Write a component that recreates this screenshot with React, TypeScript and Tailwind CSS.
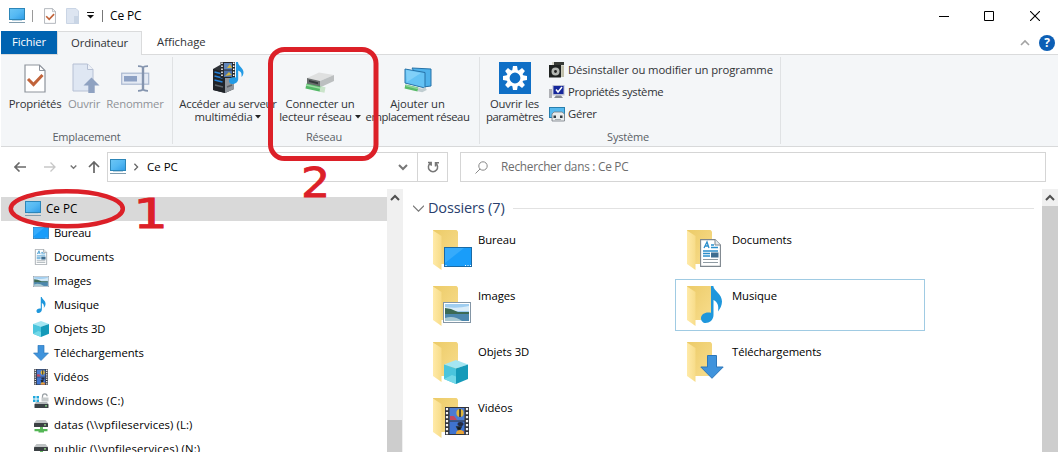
import React from "react";

type IconProps = { className?: string };

function Monitor({ className = "w-4 h-4" }: IconProps) {
  return (
    <svg viewBox="0 0 16 16" className={className}>
      <defs>
        <linearGradient id="scr" x1="0" y1="0" x2="1" y2="1">
          <stop offset="0" stopColor="#6cc6f5" />
          <stop offset=".5" stopColor="#55b9f3" />
          <stop offset="1" stopColor="#2e9be6" />
        </linearGradient>
      </defs>
      <rect x=".5" y=".5" width="15" height="11" fill="url(#scr)" stroke="#2d86b8" />
      <path d="M3 12.500h10" stroke="#b9d3e2" strokeWidth="1" />
      <path d="M0 14.500h16" stroke="#7f9cae" strokeWidth="1" />
    </svg>
  );
}

function CheckDoc({ className }: IconProps) {
  return (
    <svg viewBox="0 0 22 29" className={className}>
      <path d="M1 1h14.5L21 6.5V28H1z" fill="#fff" stroke="#8d939c" strokeWidth="1.2" />
      <path d="M15.5 1v5.5H21" fill="none" stroke="#8d939c" strokeWidth="1" />
      <path d="M4 15l5.500 5.500 9-9.500" fill="none" stroke="#c1633a" strokeWidth="3" />
    </svg>
  );
}

function OpenDoc({ className }: IconProps) {
  return (
    <svg viewBox="0 0 28 31" className={className}>
      <path d="M1 1h14.500L21 6.500V28H1z" fill="#dfe7f3" stroke="#b6c0d4" />
      <path d="M15.500 1v5.500H21" fill="#eef2f8" stroke="#b6c0d4" />
      <path d="M19.500 14.500l8 8h-4.800V30h-6.400v-7.500h-4.800z" fill="#8fa2c1" />
    </svg>
  );
}

function Rename({ className }: IconProps) {
  return (
    <svg viewBox="0 0 29 27" className={className}>
      <rect x=".7" y="8.200" width="27" height="11" fill="#e4eaf4" stroke="#aab8d0" strokeWidth="1.200" />
      <rect x="3" y="11" width="13" height="5.500" fill="#8da1c4" />
      <path d="M22 2v23" stroke="#8494ae" strokeWidth="2.400" />
      <path d="M17 1.200c3 0 5 .6 5 2 0-1.400 2-2 5-2M17 25.800c3 0 5-.6 5-2 0 1.400 2 2 5 2" fill="none" stroke="#8494ae" strokeWidth="1.800" />
    </svg>
  );
}

function Film({ className }: IconProps) {
  return (
    <svg viewBox="0 0 24 28" className={className}>
      <rect width="24" height="28" fill="#33353b" />
      <path d="M2 1v27M22 1v27" stroke="#f4f4f4" strokeWidth="2.200" strokeDasharray="2.300 1.700" />
      <rect x="4.500" y="1" width="15" height="12.500" fill="#4c7cd2" />
      <rect x="4.500" y="14.500" width="15" height="12.500" fill="#3f73cf" />
      <path d="M5 9h4l3 4H5zM14 24h5v3h-7z" fill="#c24862" />
      <ellipse cx="15" cy="6" rx="3.600" ry="4" fill="#e0b63c" />
      <path d="M15 2v8M12 20l4 0-2 4z" stroke="#222b30" strokeWidth="1.600" />
      <ellipse cx="15.500" cy="17" rx="3" ry="2" fill="#252c43" />
      <path d="M11 27a4 4 0 0 1 8 0z" fill="#e6a738" />
    </svg>
  );
}

function Note({ className }: IconProps) {
  return (
    <svg viewBox="0 0 21 37" className={className}>
      <path
        d="M10 0h2.300c.5 5 8.700 8 8.700 15.500 0 4-1.800 7-4 10 1-6-.5-9.500-4.500-11.500v15c0 5-4 8-8 8C2 37 0 34.800 0 32.200c0-4 4.500-6.700 10-5.400z"
        fill="#1f97dc"
      />
    </svg>
  );
}

function MediaServer() {
  return (
    <svg viewBox="0 0 32 32" className="h-8 w-8">
      <path d="M1 7l7-4 14 2v22l-9 4-12-3z" fill="#30343a" />
      <path d="M13 11l9-4v20l-9 4z" fill="#8f959b" />
      <path d="M1 7l12 3v21L1 28z" fill="#1f2328" />
      <path d="M2.500 10l8 2M2.500 14l8 2M2.500 18l8 2" stroke="#2480d8" strokeWidth="1.500" />
      <path d="M3 23l8 2M15 25l5-2" stroke="#5c6268" strokeWidth="1.500" />
      <rect x="8.500" y="0" width="14.500" height="16" fill="#25272b" />
      <path d="M10 .5v15M21.700 .5v15" stroke="#fff" strokeWidth="1.500" strokeDasharray="1.500 1.500" />
      <rect x="12" y="1" width="8" height="6.500" fill="#6186ba" />
      <rect x="12" y="8.500" width="8" height="6.500" fill="#4e72aa" />
      <path d="M15 6l3-4 2 4zM13 14l4-4 3 3z" fill="#d2b542" />
      <path d="M24 0h2c0 4 6 6 5.500 11-.3 2-1 3-2 4 .5-4-.5-5.500-3.300-6.500V17c0 3-3 5-6 5-2.200 0-3.200-1.500-3.200-3.200 0-2.800 3-4.300 7-3.300z" fill="#249be5" />
    </svg>
  );
}

function NetDrive() {
  return (
    <svg viewBox="0 0 32 32" className="h-8 w-8">
      <path d="M3 16l12-5.500 15 2.500-14 6z" fill="#dfe0e0" />
      <path d="M3 16l13 3v6.500L3 22z" fill="#686d6d" />
      <path d="M5 18l9 2.200v2L5 20z" fill="#33393b" />
      <path d="M16 19l14-6v6l-14 6.500z" fill="#bcbfc0" />
      <path d="M2 24l16 3.500" stroke="#53b866" strokeWidth="5" />
      <path d="M2 23l16 3.500" stroke="#9bdba2" strokeWidth="1.500" />
      <path d="M16 27l5 1" stroke="#c9e3c9" strokeWidth="5.500" />
    </svg>
  );
}

function NetPlace() {
  return (
    <svg viewBox="0 0 32 32" className="h-8 w-8">
      <path d="M10 6l19 1v17l-8 1z" fill="#4fb2eb" stroke="#2672a8" />
      <path d="M3 7l20 3.500V26L3 21z" fill="#64c2f4" stroke="#2672a8" />
      <path d="M4 8l15 3L5 20z" fill="#94d9fa" opacity=".6" />
      <path d="M3 24.500l13 3" stroke="#58bb68" strokeWidth="4" />
      <path d="M4 23.500l12 3" stroke="#91d69b" strokeWidth="1.300" />
      <path d="M16 27.500l4 1 4-2" fill="none" stroke="#c0cdd1" strokeWidth="3.500" />
    </svg>
  );
}

const teeth = [0, 45, 90, 135, 180, 225, 270, 315];

function Gear() {
  return (
    <svg viewBox="0 0 32 32" className="h-8 w-8">
      <rect width="32" height="32" fill="#0f6fc6" />
      <g fill="#fff">
        {teeth.map((a) => (
          <path key={a} d="M13.300 8l.7-4h4l.7 4z" transform={`rotate(${a} 16 16)`} />
        ))}
      </g>
      <circle cx="16" cy="16" r="7" fill="none" stroke="#fff" strokeWidth="3.200" />
    </svg>
  );
}

function Uninstall() {
  return (
    <svg viewBox="0 0 16 16" className="h-4 w-4">
      <rect x="3" width="12" height="15" fill="#d5d5ca" />
      <rect x="5" width="10" height="3" fill="#373a36" />
      <rect x="0" y="3" width="12" height="12.500" fill="#1e2120" />
      <circle cx="6.500" cy="9.500" r="4" fill="#b4b7b3" />
      <circle cx="6.500" cy="9.500" r="1.400" fill="#222" />
      <path d="M12.500 4h2.500v11h-2.500z" fill="#c0bea9" />
    </svg>
  );
}

function SystemProps() {
  return (
    <svg viewBox="0 0 16 16" className="h-4 w-4">
      <rect x="0" y="5" width="3" height="9" fill="#aeb0b5" />
      <rect x="3.500" y="1" width="12" height="10.500" fill="#b9bdd0" />
      <rect x="4.500" y="2" width="10" height="8" fill="#15279b" />
      <path d="M7 5.500l2 2.500 4-5" fill="none" stroke="#fff" strokeWidth="1.500" />
      <path d="M5 14h9l-2-2.500H7z" fill="#858993" />
    </svg>
  );
}

function Manage() {
  return (
    <svg viewBox="0 0 16 16" className="h-4 w-4">
      <rect x=".5" y="1.500" width="15" height="10" fill="#56b9ee" stroke="#277faf" />
      <path d="M3 8l2-2h8l2.500 2v7H3z" fill="#e9eced" stroke="#737c83" strokeWidth=".8" />
      <path d="M4.500 9.500h2.500v2.500H4.500zM11 9.500h2.500v2.500H11z" fill="#333b42" />
      <path d="M6 13.500h6" stroke="#abb0b4" />
    </svg>
  );
}

function Desktop({ className = "h-4 w-4" }: IconProps) {
  return (
    <svg viewBox="0 0 28 20" preserveAspectRatio="none" className={className}>
      <rect x=".5" y=".5" width="27" height="19" fill="#199dfa" stroke="#1a6aa5" />
      <path d="M1 16L20 1H1z" fill="#36abfb" />
      <path d="M1.500 18.500h1M21 18.500h1M23.500 18.500h1M26 18.500h1" stroke="#fff" />
    </svg>
  );
}

function DocPage({ className = "h-4 w-4" }: IconProps) {
  return (
    <svg viewBox="0 0 21 28" className={className}>
      <path d="M.6.6H15L20.400 6v21.400H.6z" fill="#fff" stroke="#7d868d" strokeWidth="1.100" />
      <path d="M15 .6V6h5.400" fill="#e6eaed" stroke="#7d868d" />
      <path d="M4 9l3-6 2 6M5 7h3M11 6h3M11 8.500h7M3 12h15M3 14.500h7M3 17h7" fill="none" stroke="#2b8ecb" strokeWidth="1.300" />
      <path d="M3 20.500h15M3 23.500h15" stroke="#8f9ba3" strokeWidth="1.200" />
      <rect x="11" y="13.500" width="7.500" height="5" fill="#3e6d90" />
    </svg>
  );
}

function Picture({ className = "h-4 w-4" }: IconProps) {
  return (
    <svg viewBox="0 0 28 21" preserveAspectRatio="none" className={className}>
      <rect x=".5" y=".5" width="27" height="20" fill="#fff" stroke="#8496a6" />
      <rect x="2" y="2" width="24" height="17" fill="#9fcdf0" />
      <path d="M2 5q12 2 24-1v5H2z" fill="#d9ecf8" />
      <path d="M2 6l6 1 7 3 11 0v3H2z" fill="#3c6a54" />
      <path d="M2 12h24v7H2z" fill="#4c87ad" />
      <path d="M2 16q9-3 17 3H2z" fill="#a9c9d3" />
    </svg>
  );
}

function Cube({ className = "h-4 w-4" }: IconProps) {
  return (
    <svg viewBox="0 0 24 24" className={className}>
      <path d="M0 4.500L12 0l12 4.500L12 8.500z" fill="#a4e6f2" />
      <path d="M0 4.500l12 4V24L0 19z" fill="#4ac5dd" />
      <path d="M24 4.500l-12 4V24l12-5z" fill="#149ab9" />
      <path d="M0 19l8-4 4 1.500V24z" fill="#72d8e8" />
    </svg>
  );
}

function DownArrow({ className = "h-4 w-4" }: IconProps) {
  return (
    <svg viewBox="0 0 24 24" className={className}>
      <path d="M7.500.5h9V12h6.700L12 23.300.8 12h6.700z" fill="#3f93dc" stroke="#2c76b9" />
    </svg>
  );
}

function SmallNote() {
  return <Note className="h-4 w-4" />;
}

function SmallFilm() {
  return <Film className="h-4 w-4" />;
}

function WinDrive() {
  return (
    <svg viewBox="0 0 16 16" className="h-4 w-4">
      <path d="M0 3h2.500v2.500H0zM3.500 3H6v2.500H3.500zM0 6.500h2.500V9H0zM3.500 6.500H6V9H3.500z" fill="#21a8dc" />
      <path d="M9.500 5V3.200a2.300 2.300 0 0 1 4.600 0" fill="none" stroke="#9aa1a5" strokeWidth="1.200" />
      <rect x="8.500" y="4.500" width="7" height="4" fill="#c6cacb" />
      <path d="M3 9h11l1.500 2h-14z" fill="#b3b8ba" />
      <rect x="1.500" y="11" width="14" height="4" rx=".6" fill="#3a4145" />
      <rect x="12" y="12.300" width="2" height="1.200" fill="#8fe58a" />
    </svg>
  );
}

function ShareDrive() {
  return (
    <svg viewBox="0 0 16 16" className="h-4 w-4">
      <path d="M3.500 3h9L15 6H1z" fill="#bfc3c4" />
      <rect x="1" y="6" width="14" height="4" rx=".5" fill="#3c4144" />
      <rect x="11" y="7.300" width="2" height="1.200" fill="#9ae38f" />
      <path d="M7 10h3v2H7z" fill="#66bb63" />
      <path d="M1.500 12h13v2.200h-3.500V15.500H5.500v-1.300h-4z" fill="#53b655" />
    </svg>
  );
}

function Folder() {
  return (
    <svg viewBox="0 0 27 40" className="h-10 w-[27px]">
      <defs>
        <linearGradient id="fback" x1="0" y1="0" x2="1" y2="1">
          <stop offset="0" stopColor="#eccb68" />
          <stop offset="1" stopColor="#f8dd8d" />
        </linearGradient>
        <linearGradient id="ffront" x1="0" y1="0" x2="1" y2="0">
          <stop offset="0" stopColor="#ffeaa8" />
          <stop offset="1" stopColor="#f7dc89" />
        </linearGradient>
      </defs>
      <path d="M1 0h23.500l1.500 1.500V34H5z" fill="url(#fback)" />
      <path d="M1 .5L9.500 6v34L1 34z" fill="url(#ffront)" />
    </svg>
  );
}

function BigTile({ label, children, focused = false }: { label: string; children: React.ReactNode; focused?: boolean }) {
  return (
    <div className={`flex h-[52px] w-[250px] border ${focused ? "border-[#a0cbe3]" : "border-transparent"}`}>
      <div className="relative ml-[10px] mt-[6px] h-10 w-[46px]">
        <Folder />
        {children}
      </div>
      <span className="mt-[7px] leading-[18px] tracking-[-0.08px] text-black">{label}</span>
    </div>
  );
}

function TreeRow({ label, icon, className = "tracking-[-0.05px]" }: { label: string; icon: React.ReactNode; className?: string }) {
  return (
    <div className="flex h-6 shrink-0 items-center gap-[5px] pl-8 text-black">
      {icon}
      <span className={`leading-4 ${className}`}>{label}</span>
    </div>
  );
}

function Caret() {
  return (
    <svg viewBox="0 0 6 4" className="mb-[2px] ml-[3px] inline h-1 w-1.5">
      <path d="M0 0h6L3 3.500z" fill="#222" />
    </svg>
  );
}

function RibbonButton({ className, icon, children }: { className: string; icon: React.ReactNode; children: React.ReactNode }) {
  return (
    <div className={`flex shrink-0 flex-col items-center ${className}`}>
      <div className="flex h-8 items-center justify-center">{icon}</div>
      <div className="mt-[3px] whitespace-nowrap text-center leading-[13px] tracking-[-0.2px]">{children}</div>
    </div>
  );
}

function RibbonGroup({ label, className, children }: { label: string; className: string; children: React.ReactNode }) {
  return (
    <div className={`flex flex-col pt-[7px] ${className}`}>
      <div className="flex h-[67px]">{children}</div>
      <div className="text-center text-[11px] leading-[15px] tracking-[-0.2px] text-[#5a5f66]">{label}</div>
    </div>
  );
}

function Chevron({ className, d, color = "#555", width = 1.6 }: { className: string; d: string; color?: string; width?: number }) {
  return (
    <svg viewBox="0 0 10 10" className={className}>
      <path d={d} fill="none" stroke={color} strokeWidth={width} />
    </svg>
  );
}

export default function App() {
  return (
    <div className="relative flex h-[452px] w-[1059px] flex-col overflow-hidden bg-white px-px font-['Open_Sans','Noto_Sans',sans-serif] text-[11.3px] text-[#303236]">
      <header className="flex h-[31px] shrink-0 items-center pl-2">
        <Monitor />
        <span className="ml-[7px] h-3 w-px bg-[#9a9a9a]" />
        <CheckDoc className="ml-[11px] h-4 w-3" />
        <svg viewBox="0 0 13 16" className="ml-[10px] h-4 w-[13px]">
          <path d="M.5.5H10L12.500 3v12.500H.5z" fill="#dde5f1" stroke="#cad5e5" />
          <path d="M8 8h5v8H8z" fill="#c9d5e5" />
        </svg>
        <svg viewBox="0 0 7 7" className="ml-2 h-[7px] w-[7px]">
          <path d="M0 .5h7" stroke="#111" />
          <path d="M0 3h7L3.500 6.500z" fill="#111" />
        </svg>
        <span className="ml-2 h-3 w-px bg-[#777]" />
        <span className="ml-[7px] text-xs tracking-[-0.15px] text-black">Ce PC</span>
        <div className="ml-auto flex items-center pr-[18px]">
          <svg viewBox="0 0 10 10" className="mr-[35px] h-[10px] w-[10px]"><path d="M0 5.500h10" stroke="#000" /></svg>
          <svg viewBox="0 0 10 10" className="mr-9 h-[10px] w-[10px]"><path d="M.5.5h9v9h-9z" fill="none" stroke="#000" /></svg>
          <svg viewBox="0 0 10 10" className="h-[10px] w-[10px]"><path d="M0 0l10 10M10 0L0 10" stroke="#000" strokeWidth="1.100" /></svg>
        </div>
      </header>

      <nav className="flex h-6 shrink-0 items-stretch border-b border-[#dadbdc]">
        <span className="flex w-14 items-center justify-center bg-[#0063b1] tracking-[-0.1px] text-white">Fichier</span>
        <span className="-mb-px flex w-[85px] items-center justify-center border border-b-0 border-[#dadbdc] bg-[#f4f6f8] pb-px tracking-[-0.15px]">Ordinateur</span>
        <span className="ml-[15px] flex items-center">Affichage</span>
        <div className="ml-auto flex items-center gap-[9px] pr-[3px]">
          <Chevron className="h-[10px] w-[10px]" d="M1 7l4-4 4 4" color="#a3a3a3" />
          <span className="flex h-4 w-4 items-center justify-center rounded-full bg-[#0c5fb5] text-xs font-bold leading-4 text-white">?</span>
        </div>
      </nav>

      <section className="flex h-[92px] shrink-0 border-b border-[#d8d9da] bg-[#f4f6f8]">
        <RibbonGroup label="Emplacement" className="w-[171px]">
          <RibbonButton className="ml-2 w-[52px]" icon={<CheckDoc className="h-[29px] w-[22px]" />}>Propriétés</RibbonButton>
          <RibbonButton className="w-[46px] text-[#8f9297]" icon={<OpenDoc className="ml-1 h-[31px] w-7" />}>Ouvrir</RibbonButton>
          <RibbonButton className="w-14 text-[#8f9297]" icon={<Rename className="h-[27px] w-[29px]" />}>Renommer</RibbonButton>
        </RibbonGroup>
        <div className="my-[2px] w-px bg-[#e0e2e4]" />
        <RibbonGroup label="Réseau" className="w-[306px] pr-1">
          <RibbonButton className="ml-2 w-[94px]" icon={<MediaServer />}>Accéder au serveur<br />multimédia<Caret /></RibbonButton>
          <RibbonButton className="w-[90px]" icon={<NetDrive />}>Connecter un<br />lecteur réseau<Caret /></RibbonButton>
          <RibbonButton className="w-[105px]" icon={<NetPlace />}><span className="tracking-[-0.1px]">Ajouter un</span><br /><span className="tracking-[-0.4px]">emplacement réseau</span></RibbonButton>
        </RibbonGroup>
        <div className="my-[2px] w-px bg-[#e0e2e4]" />
        <RibbonGroup label="Système" className="w-[300px] pr-1">
          <RibbonButton className="ml-[6px] w-[57px]" icon={<Gear />}>Ouvrir les<br /><span className="tracking-[-0.4px]">paramètres</span></RibbonButton>
          <div className="ml-[6px] flex flex-col gap-[6px] whitespace-nowrap">
            <div className="flex h-4 items-center gap-[3px] tracking-[-0.1px]"><Uninstall />Désinstaller ou modifier un programme</div>
            <div className="flex h-4 items-center gap-[3px] tracking-[-0.33px]"><SystemProps />Propriétés système</div>
            <div className="flex h-4 items-center gap-[3px] tracking-[-0.33px]"><Manage />Gérer</div>
          </div>
        </RibbonGroup>
        <div className="my-[2px] w-px bg-[#e0e2e4]" />
      </section>

      <div className="flex h-[42px] shrink-0 items-start pt-[5px]">
        <div className="flex h-[30px] w-[106px] items-center pl-[13px]">
          <svg viewBox="0 0 12 10" className="h-[10px] w-3"><path d="M12 5H1M5.500.5L1 5l4.500 4.500" fill="none" stroke="#6a6a6a" strokeWidth="1.600" /></svg>
          <svg viewBox="0 0 12 10" className="ml-[18px] h-[10px] w-3"><path d="M0 5h11M6.500.5L11 5 6.500 9.500" fill="none" stroke="#c7c7c7" strokeWidth="1.300" /></svg>
          <Chevron className="ml-[14px] h-[7px] w-[7px]" d="M1 2l4 4 4-4" color="#777" width={2} />
          <svg viewBox="0 0 12 12" className="ml-[11px] h-3 w-3"><path d="M6 12V1M1 6l5-5 5 5" fill="none" stroke="#666" strokeWidth="1.700" /></svg>
        </div>
        <div className="flex h-[30px] w-[341px] items-center border border-[#d5d5d5] pl-[2px]">
          <Monitor className="h-4 w-4" />
          <Chevron className="ml-[6px] h-2 w-2" d="M3 1l4 4-4 4" color="#666" />
          <span className="ml-[7px] text-[11.500px] text-black">Ce PC</span>
          <Chevron className="ml-auto mr-[9px] h-[10px] w-[10px]" d="M1 3l4 4 4-4" color="#777" width={2} />
          <div className="flex h-full w-[30px] items-center justify-center border-l border-[#d5d5d5]">
            <svg viewBox="0 0 12 12" className="h-3 w-3"><path d="M3.500 2.200a4.600 4.600 0 1 0 5 0M1 1.500h3.200v3.200M8.500 5.500V1.800H12" fill="none" stroke="#777" strokeWidth="1.500" /></svg>
          </div>
        </div>
        <div className="ml-3 flex h-[30px] w-[586px] items-center border border-[#d5d5d5] pl-[14px] text-[#6d6d6d]">
          <svg viewBox="0 0 13 13" className="h-[13px] w-[13px]"><circle cx="8" cy="5" r="4.200" fill="none" stroke="#888" /><path d="M5 8l-4.500 4.500" stroke="#888" /></svg>
          <span className="ml-[13px] text-[11.800px] tracking-[-0.25px]">Rechercher dans : Ce PC</span>
        </div>
      </div>

      <main className="flex min-h-0 flex-1">
        <aside className="flex w-[386px] flex-col overflow-hidden pt-2">
          <div className="flex h-6 shrink-0 items-center gap-[5px] bg-[#d9d9d9] pl-6 text-black">
            <Monitor /><span className="text-[11.700px]">Ce PC</span>
          </div>
          <TreeRow label="Bureau" className="tracking-[-0.25px]" icon={<Desktop className="h-3 w-4" />} />
          <TreeRow label="Documents" icon={<DocPage />} />
          <TreeRow label="Images" icon={<Picture className="h-[11px] w-4" />} />
          <TreeRow label="Musique" icon={<SmallNote />} />
          <TreeRow label="Objets 3D" icon={<Cube />} />
          <TreeRow label="Téléchargements" icon={<DownArrow />} />
          <TreeRow label="Vidéos" icon={<SmallFilm />} />
          <TreeRow label="Windows (C:)" className="tracking-[0.2px]" icon={<WinDrive />} />
          <TreeRow label="datas (\\vpfileservices) (L:)" className="tracking-[0.1px]" icon={<ShareDrive />} />
          <TreeRow label="public (\\vpfileservices) (N:)" className="tracking-[0.17px]" icon={<ShareDrive />} />
        </aside>
        <div className="flex w-4 flex-col bg-[#f0f0f0]">
          <div className="flex h-[231px] justify-center pt-[4px]">
            <Chevron className="h-[10px] w-[10px]" d="M1 7l4-4 4 4" color="#505050" width={2} />
          </div>
          <div className="mr-px flex-1 bg-[#cdcdcd]" />
        </div>
        <div className="flex flex-1 flex-col overflow-hidden pl-[10px]">
          <div className="flex h-[38px] items-center pr-2">
            <Chevron className="h-[11px] w-[11px]" d="M0 2.500l5 5 5-5" color="#777" width={1.1} />
            <h2 className="ml-1 text-[14.500px] tracking-[-0.15px] text-[#2a3f6e]">Dossiers (7)</h2>
            <div className="ml-2 h-px flex-1 bg-[#e2e2e2]" />
          </div>
          <div className="ml-2 mt-[-4px] grid grid-cols-[250px_250px] gap-1">
            <BigTile label="Bureau"><Desktop className="absolute left-3 top-[17px] h-5 w-7" /></BigTile>
            <BigTile label="Documents"><DocPage className="absolute left-[14px] top-[9px] h-7 w-[21px]" /></BigTile>
            <BigTile label="Images"><Picture className="absolute left-[11px] top-4 h-[21px] w-7" /></BigTile>
            <BigTile label="Musique" focused><Note className="absolute left-[15px] top-0 h-[37px] w-[21px]" /></BigTile>
            <BigTile label="Objets 3D"><Cube className="absolute left-3 top-[18px] h-6 w-6" /></BigTile>
            <BigTile label="Téléchargements"><DownArrow className="absolute left-[14px] top-[13px] h-6 w-6" /></BigTile>
            <BigTile label="Vidéos"><Film className="absolute left-[13px] top-[9px] h-7 w-6" /></BigTile>
          </div>
        </div>
        <div className="flex w-4 flex-col bg-[#cdcdcd]">
          <div className="flex h-[17px] items-center justify-center bg-[#f0f0f0]">
            <Chevron className="h-[10px] w-[10px]" d="M1 7l4-4 4 4" color="#505050" width={2} />
          </div>
        </div>
      </main>

      <svg viewBox="0 0 1059 452" className="pointer-events-none absolute inset-0 h-[452px] w-[1059px]">
        <ellipse cx="66.800" cy="208.700" rx="56" ry="17.500" fill="none" stroke="#dc2028" strokeWidth="4.500" />
        <rect x="270.500" y="49.500" width="105.500" height="109" rx="14" fill="none" stroke="#dc2028" strokeWidth="5" />
      </svg>
      <span className="absolute left-[133px] top-[194px] origin-left scale-x-[1.350] font-['DejaVu_Sans',sans-serif] text-[41px] leading-10 text-[#dc2028] [-webkit-text-stroke:0.8px_#dc2028]">1</span>
      <span className="absolute left-[301px] top-[163px] origin-left scale-x-[1.120] font-['DejaVu_Sans',sans-serif] text-[41px] leading-10 text-[#dc2028] [-webkit-text-stroke:0.8px_#dc2028]">2</span>
    </div>
  );
}
